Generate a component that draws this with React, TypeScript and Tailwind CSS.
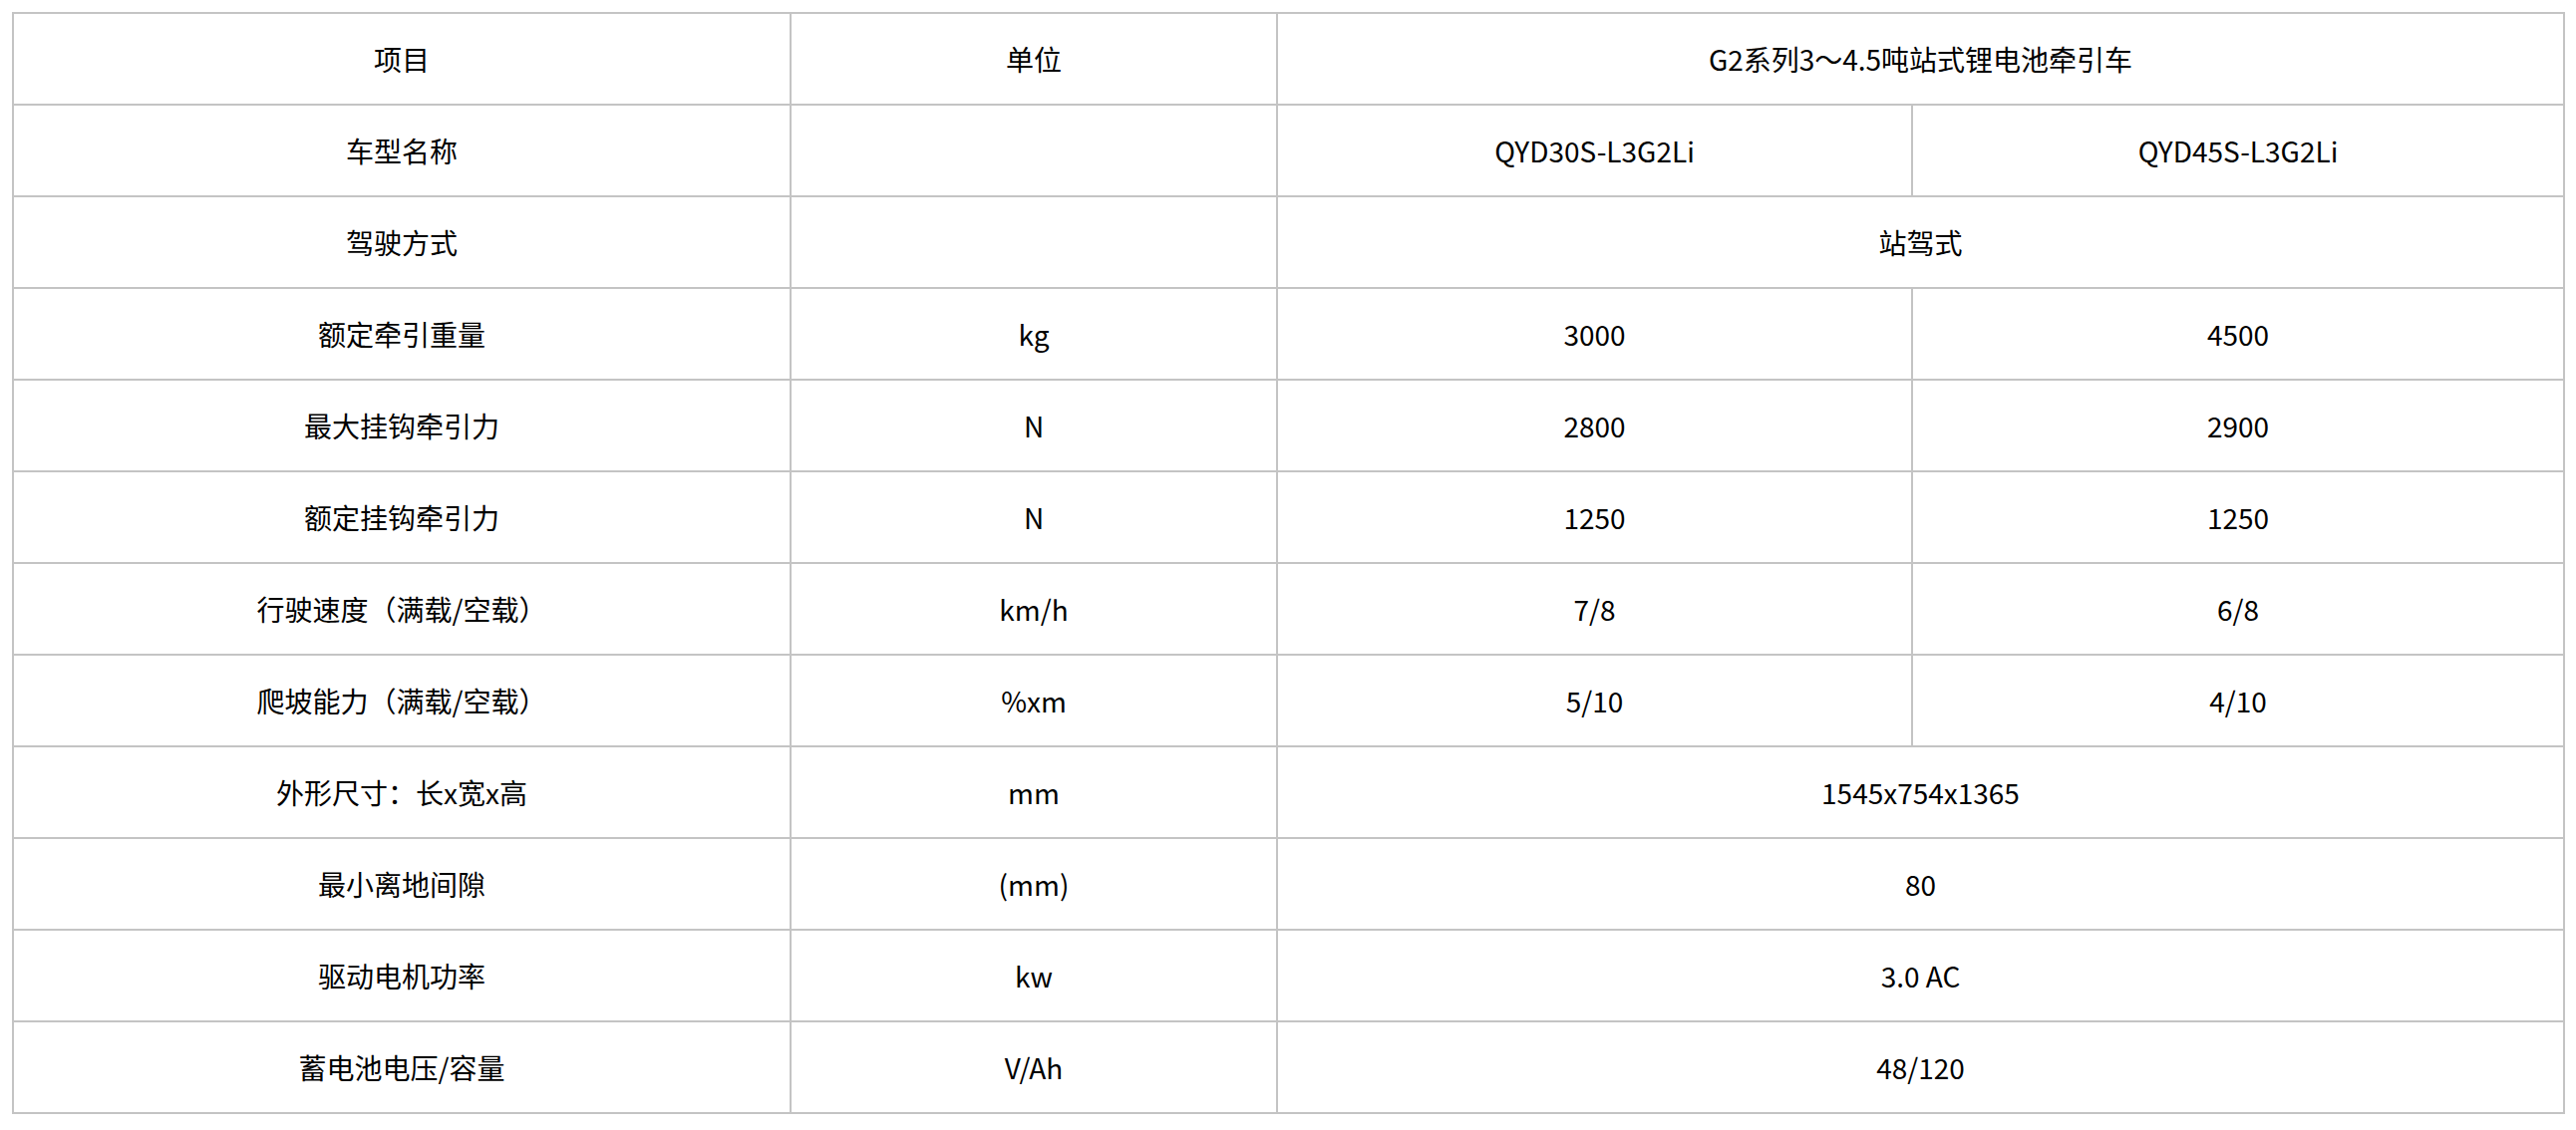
type Cell = { text: string; span?: number };

const ROWS: Cell[][] = [
  [{ text: "项目" }, { text: "单位" }, { text: "G2系列3～4.5吨站式锂电池牵引车", span: 2 }],
  [{ text: "车型名称" }, { text: "" }, { text: "QYD30S-L3G2Li" }, { text: "QYD45S-L3G2Li" }],
  [{ text: "驾驶方式" }, { text: "" }, { text: "站驾式", span: 2 }],
  [{ text: "额定牵引重量" }, { text: "kg" }, { text: "3000" }, { text: "4500" }],
  [{ text: "最大挂钩牵引力" }, { text: "N" }, { text: "2800" }, { text: "2900" }],
  [{ text: "额定挂钩牵引力" }, { text: "N" }, { text: "1250" }, { text: "1250" }],
  [{ text: "行驶速度（满载/空载）" }, { text: "km/h" }, { text: "7/8" }, { text: "6/8" }],
  [{ text: "爬坡能力（满载/空载）" }, { text: "%xm" }, { text: "5/10" }, { text: "4/10" }],
  [{ text: "外形尺寸：长x宽x高" }, { text: "mm" }, { text: "1545x754x1365", span: 2 }],
  [{ text: "最小离地间隙" }, { text: "(mm)" }, { text: "80", span: 2 }],
  [{ text: "驱动电机功率" }, { text: "kw" }, { text: "3.0 AC", span: 2 }],
  [{ text: "蓄电池电压/容量" }, { text: "V/Ah" }, { text: "48/120", span: 2 }],
];

export default function App() {
  return (
    <div className="min-h-screen bg-white p-3 font-['Noto_Sans_CJK_SC','Noto_Sans',sans-serif] text-[28px] text-black">
      <table className="w-[2559px] table-fixed border-collapse">
        <colgroup>
          <col className="w-[780px]" />
          <col className="w-[488px]" />
          <col className="w-[637px]" />
          <col className="w-[654px]" />
        </colgroup>
        <tbody>
          {ROWS.map((row, i) => (
            <tr key={i} className="h-[92px]">
              {row.map((cell, j) => (
                <td
                  key={j}
                  colSpan={cell.span}
                  className="border-2 border-[#c4c4c4] p-0 text-center align-middle leading-none"
                >
                  {cell.text}
                </td>
              ))}
            </tr>
          ))}
        </tbody>
      </table>
    </div>
  );
}
